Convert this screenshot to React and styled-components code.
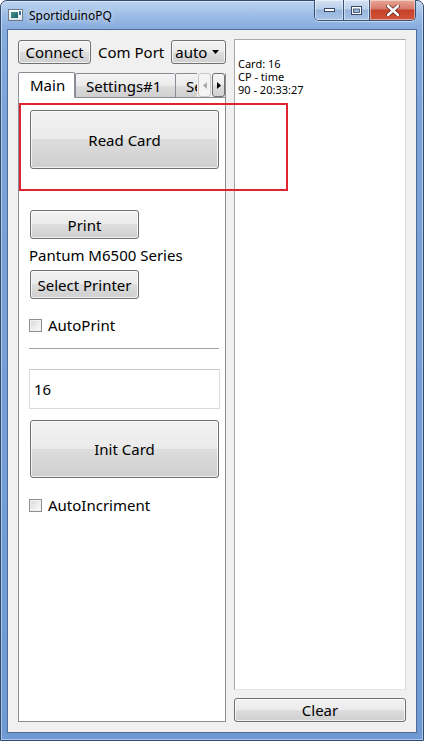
import React from 'react';
import styled, { createGlobalStyle, css } from 'styled-components';

const Global = createGlobalStyle`
  html, body { margin: 0; padding: 0; background: #ffffff; }
  body { font-family: "Noto Sans", "Open Sans", sans-serif; color: #000; }
  * { box-sizing: border-box; }
`;

const UI_FONT = `"Noto Sans", "Open Sans", sans-serif`;

const Window = styled.div`
  width: 424px;
  height: 741px;
  display: flex;
  flex-direction: column;
  padding: 0 6px 7px;
  border: 1px solid #30496e;
  border-radius: 7px 7px 0 0;
  background: linear-gradient(180deg, #bcd3ef 0px, #9dbde5 14px, #86acdd 28px, #7ba3d9 120px, #6e99d2 100%);
  box-shadow: inset 0 0 0 1px rgba(255, 255, 255, 0.45);
`;

const TitleBar = styled.div`
  height: 28px;
  display: flex;
  align-items: flex-start;
  flex-shrink: 0;
`;

const AppIcon = styled.div`
  width: 15px;
  height: 12px;
  margin: 8px 6px 0 1px;
  border: 1px solid #6a7a88;
  background: linear-gradient(180deg, #ffffff, #dfe6ec);
  position: relative;
  &::before {
    content: '';
    position: absolute;
    left: 2px; top: 2px;
    width: 7px; height: 6px;
    background: linear-gradient(135deg, #3f9a86, #1d5f6e);
  }
  &::after {
    content: '';
    position: absolute;
    right: 1px; top: 1px;
    width: 2px; height: 4px;
    background: #3b6f9c;
  }
`;

const Title = styled.div`
  font-family: ${UI_FONT};
  font-size: 12px;
  line-height: 14px;
  margin-top: 8px;
  color: #000;
  text-shadow: 0 0 6px rgba(255, 255, 255, 0.9);
  flex: 1;
`;

const Controls = styled.div`
  display: flex;
  height: 21px;
  margin-top: -1px;
  margin-right: 1px;
  border: 1px solid #3a5277;
  border-top: none;
  border-radius: 0 0 5px 5px;
  overflow: hidden;
  box-shadow: 0 1px 0 rgba(255, 255, 255, 0.5);
`;

const CtrlButton = styled.div`
  width: ${p => p.$w}px;
  height: 100%;
  display: flex;
  align-items: center;
  justify-content: center;
  border-left: ${p => (p.$first ? 'none' : '1px solid #3a5277')};
  background: ${p =>
    p.$close
      ? 'linear-gradient(180deg, #e8a795 0%, #d7796a 45%, #c6412b 50%, #d1553a 100%)'
      : 'linear-gradient(180deg, #d5e3f4 0%, #b9cfeb 45%, #97b4dc 50%, #a9c4e6 100%)'};
  box-shadow: inset 0 0 0 1px rgba(255, 255, 255, 0.45);
`;

const Client = styled.div`
  flex: 1;
  position: relative;
  display: flex;
  gap: 8px;
  padding: 9px 10px 10px;
  border: 1px solid #4d6c98;
  background: #f0f0f0;
`;

const LeftColumn = styled.div`
  width: 208px;
  display: flex;
  flex-direction: column;
  padding-top: 1px;
`;

const RightColumn = styled.div`
  width: 172px;
  display: flex;
  flex-direction: column;
  gap: 8px;
`;

const TopRow = styled.div`
  height: 24px;
  display: flex;
  align-items: center;
  margin-bottom: 8px;
`;

const buttonSkin = css`
  border: 1px solid #707070;
  border-radius: 3px;
  background: linear-gradient(180deg, #f2f2f2 0%, #ebebeb 49%, #dddddd 50%, #cfcfcf 100%);
  box-shadow: inset 0 0 0 1px rgba(255, 255, 255, 0.7);
  font-family: ${UI_FONT};
  color: #000;
`;

const Button = styled.div`
  ${buttonSkin};
  width: ${p => (p.$w ? `${p.$w}px` : 'auto')};
  height: ${p => p.$h}px;
  margin-top: ${p => p.$mt || 0}px;
  margin-left: ${p => p.$ml || 0}px;
  display: flex;
  align-items: center;
  justify-content: center;
  font-size: 15px;
  flex-shrink: 0;
`;

const Label = styled.div`
  font-family: ${UI_FONT};
  font-size: 15px;
  line-height: 20px;
  margin-top: ${p => p.$mt || 0}px;
  margin-left: ${p => p.$ml || 0}px;
  margin-right: ${p => p.$mr || 0}px;
  white-space: nowrap;
`;

const Combo = styled.div`
  ${buttonSkin};
  width: 57px;
  height: 24px;
  display: flex;
  align-items: center;
  justify-content: space-between;
  padding: 0 6px 0 3px;
  font-size: 15px;
`;

const TabBar = styled.div`
  position: relative;
  height: 26px;
  display: flex;
  align-items: flex-end;
  overflow: hidden;
  z-index: 1;
  margin-bottom: -1px;
`;

const Tab = styled.div`
  flex-shrink: 0;
  width: ${p => p.$w}px;
  height: ${p => (p.$active ? 26 : 24)}px;
  margin-bottom: ${p => (p.$active ? 0 : 1)}px;
  padding-left: ${p => p.$pl}px;
  display: flex;
  align-items: center;
  overflow: hidden;
  white-space: nowrap;
  font-family: ${UI_FONT};
  font-size: 15px;
  border: 1px solid #898c95;
  border-bottom: ${p => (p.$active ? '1px solid #ffffff' : 'none')};
  border-right: ${p => (p.$last ? '1px solid #898c95' : p.$active ? '1px solid #898c95' : 'none')};
  border-radius: 2px 2px 0 0;
  background: ${p =>
    p.$active ? '#ffffff' : 'linear-gradient(180deg, #f3f3f3 0%, #ebebeb 50%, #dddddd 51%, #cfcfcf 100%)'};
`;

const ScrollButtons = styled.div`
  position: absolute;
  right: 1px;
  top: 1px;
  display: flex;
  gap: 1px;
  background: #f0f0f0;
  padding-left: 1px;
`;

const ScrollButton = styled.div`
  width: 13px;
  height: 24px;
  border: 1px solid ${p => (p.$disabled ? '#c9c9c9' : '#707070')};
  border-radius: 3px;
  background: ${p =>
    p.$disabled ? '#f4f4f4' : 'linear-gradient(180deg, #f7f7f7 0%, #ececec 50%, #dddddd 51%, #d2d2d2 100%)'};
  display: flex;
  align-items: center;
  justify-content: center;
`;

const Panel = styled.div`
  flex: 1;
  background: #ffffff;
  border: 1px solid #898c95;
  display: flex;
  flex-direction: column;
  padding: 0 6px 0 10px;
`;

const CheckRow = styled.div`
  display: flex;
  align-items: center;
  height: 20px;
  margin-top: ${p => p.$mt}px;
  gap: 6px;
`;

const CheckBox = styled.div`
  width: 13px;
  height: 13px;
  border: 1px solid #8e8f8f;
  background: linear-gradient(135deg, #d6d6d6 0%, #efefef 60%, #fbfbfb 100%);
  box-shadow: inset 0 0 0 1px #f2f2f2;
`;

const Separator = styled.div`
  height: 2px;
  margin-top: ${p => p.$mt}px;
  border-top: 1px solid #a0a0a0;
  border-bottom: 1px solid #ffffff;
`;

const TextInput = styled.div`
  width: 191px;
  height: 40px;
  margin-top: ${p => p.$mt}px;
  border: 1px solid #dadada;
  border-top-color: #c8c8c8;
  background: #ffffff;
  display: flex;
  align-items: center;
  padding-left: 4px;
  font-family: ${UI_FONT};
  font-size: 15px;
`;

const LogBox = styled.div`
  flex: 1;
  background: #ffffff;
  border: 1px solid #a9a9a9;
  border-right-color: #dcdcdc;
  border-bottom-color: #e3e3e3;
  padding: 4px 0 0 3px;
  font-family: ${UI_FONT};
  font-size: 11px;
  line-height: 13px;
  white-space: pre;
`;

const Highlight = styled.div`
  position: absolute;
  left: 11px;
  top: 73px;
  width: 269px;
  height: 88px;
  border: 2px solid #df2431;
  pointer-events: none;
`;

export default function App() {
  return (
    <>
      <Global />
      <Window>
        <TitleBar>
          <AppIcon />
          <Title>SportiduinoPQ</Title>
          <Controls>
            <CtrlButton $w={28} $first>
              <svg width="11" height="4" viewBox="0 0 11 4">
                <rect x="0.5" y="0.5" width="10" height="3" fill="#fff" stroke="#36496a" />
              </svg>
            </CtrlButton>
            <CtrlButton $w={26}>
              <svg width="11" height="9" viewBox="0 0 11 9">
                <rect x="0.5" y="0.5" width="10" height="8" fill="#fff" stroke="#36496a" />
                <rect x="2.5" y="3" width="6" height="3.5" fill="#9cb6d8" stroke="#36496a" strokeWidth="0.8" />
              </svg>
            </CtrlButton>
            <CtrlButton $w={46} $close>
              <svg width="14" height="11" viewBox="0 0 14 11">
                <path d="M2 1 L12 10 M12 1 L2 10" stroke="#5a2a22" strokeWidth="4" strokeLinecap="round" />
                <path d="M2 1 L12 10 M12 1 L2 10" stroke="#ffffff" strokeWidth="2.4" strokeLinecap="round" />
              </svg>
            </CtrlButton>
          </Controls>
        </TitleBar>
        <Client>
          <LeftColumn>
            <TopRow>
              <Button $h={24} $w={73}>Connect</Button>
              <Label $ml={7} $mr={7}>Com Port</Label>
              <Combo>
                <span>auto</span>
                <svg width="7" height="4" viewBox="0 0 7 4">
                  <path d="M0 0 H7 L3.5 4 Z" fill="#000" />
                </svg>
              </Combo>
            </TopRow>
            <TabBar>
              <Tab $w={57} $pl={11} $active>Main</Tab>
              <Tab $w={100} $pl={10}>Settings#1</Tab>
              <Tab $w={51} $pl={10} $last>Se</Tab>
              <ScrollButtons>
                <ScrollButton $disabled>
                  <svg width="4" height="7" viewBox="0 0 4 7">
                    <path d="M4 0 V7 L0 3.5 Z" fill="#a8a8a8" />
                  </svg>
                </ScrollButton>
                <ScrollButton>
                  <svg width="4" height="7" viewBox="0 0 4 7">
                    <path d="M0 0 V7 L4 3.5 Z" fill="#000" />
                  </svg>
                </ScrollButton>
              </ScrollButtons>
            </TabBar>
            <Panel>
              <Button $h={59} $w={189} $mt={12} $ml={1}>Read Card</Button>
              <Button $h={29} $w={109} $mt={41} $ml={1}>Print</Button>
              <Label $mt={6}>Pantum M6500 Series</Label>
              <Button $h={29} $w={109} $mt={5} $ml={1}>Select Printer</Button>
              <CheckRow $mt={16}>
                <CheckBox />
                <Label>AutoPrint</Label>
              </CheckRow>
              <Separator $mt={13} />
              <TextInput $mt={19}>16</TextInput>
              <Button $h={58} $w={189} $mt={11} $ml={1}>Init Card</Button>
              <CheckRow $mt={17}>
                <CheckBox />
                <Label>AutoIncriment</Label>
              </CheckRow>
            </Panel>
          </LeftColumn>
          <RightColumn>
            <LogBox>{'\nCard: 16\nCP - time\n90 - 20:33:27'}</LogBox>
            <Button $h={24}>Clear</Button>
          </RightColumn>
          <Highlight />
        </Client>
      </Window>
    </>
  );
}
